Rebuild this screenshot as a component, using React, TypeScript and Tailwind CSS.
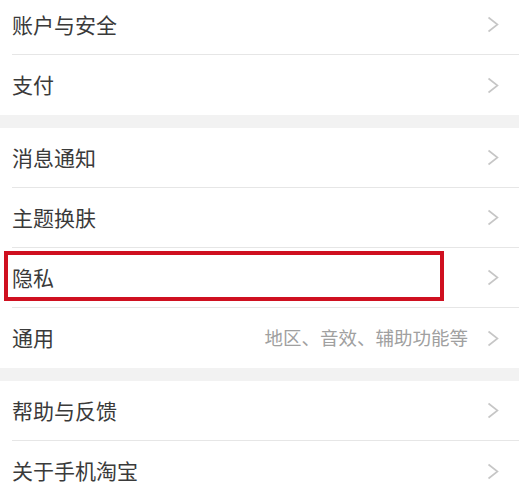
import React from 'react'

type Item = { label: string; hint?: string; marked?: boolean }

const groups: Item[][] = [
    [{label: '账户与安全'}, {label: '支付'}],
    [{label: '消息通知'}, {label: '主题换肤'}, {label: '隐私', marked: true}, {label: '通用', hint: '地区、音效、辅助功能等'}],
    [{label: '帮助与反馈'}, {label: '关于手机淘宝'}],
]

function Chevron() {
    return (
        <svg width="12" height="17" viewBox="0 0 12 17" className="shrink-0">
            <polyline points="1.5,1.5 10.5,8.5 1.5,15.5" fill="none" stroke="#c6c6c6" strokeWidth="1.6"/>
        </svg>
    )
}

function Row({item, last}: { item: Item; last: boolean }) {
    return (
        <div className="relative h-[60px] bg-white pl-[12px]">
            <div className={`flex h-full items-center pr-[20px] ${last ? '' : 'border-b border-[#e6e6e6]'}`}>
                <span className="flex-1 text-[21px] text-[#3a3a3a]">{item.label}</span>
                {item.hint && <span className="mr-[19px] text-[18.5px] text-[#a0a0a0]">{item.hint}</span>}
                <Chevron/>
            </div>
            {item.marked && (
                <div className="absolute left-[4px] top-[3px] h-[50px] w-[440px] border-[4px] border-[#cf1020]"/>
            )}
        </div>
    )
}

export default function App(): React.ReactElement {
    return (
        <div
            className="h-[492px] w-[519px] overflow-hidden bg-[#f2f2f2]"
            style={{fontFamily: '"Noto Sans CJK SC", "Noto Sans", sans-serif'}}>
            <div className="-mt-[5px] flex flex-col gap-[13px]">
                {groups.map((group, gi) => (
                    <div key={gi} className="flex flex-col">
                        {group.map((item, i) => (
                            <Row key={item.label} item={item} last={i === group.length - 1}/>
                        ))}
                    </div>
                ))}
            </div>
        </div>
    )
}
